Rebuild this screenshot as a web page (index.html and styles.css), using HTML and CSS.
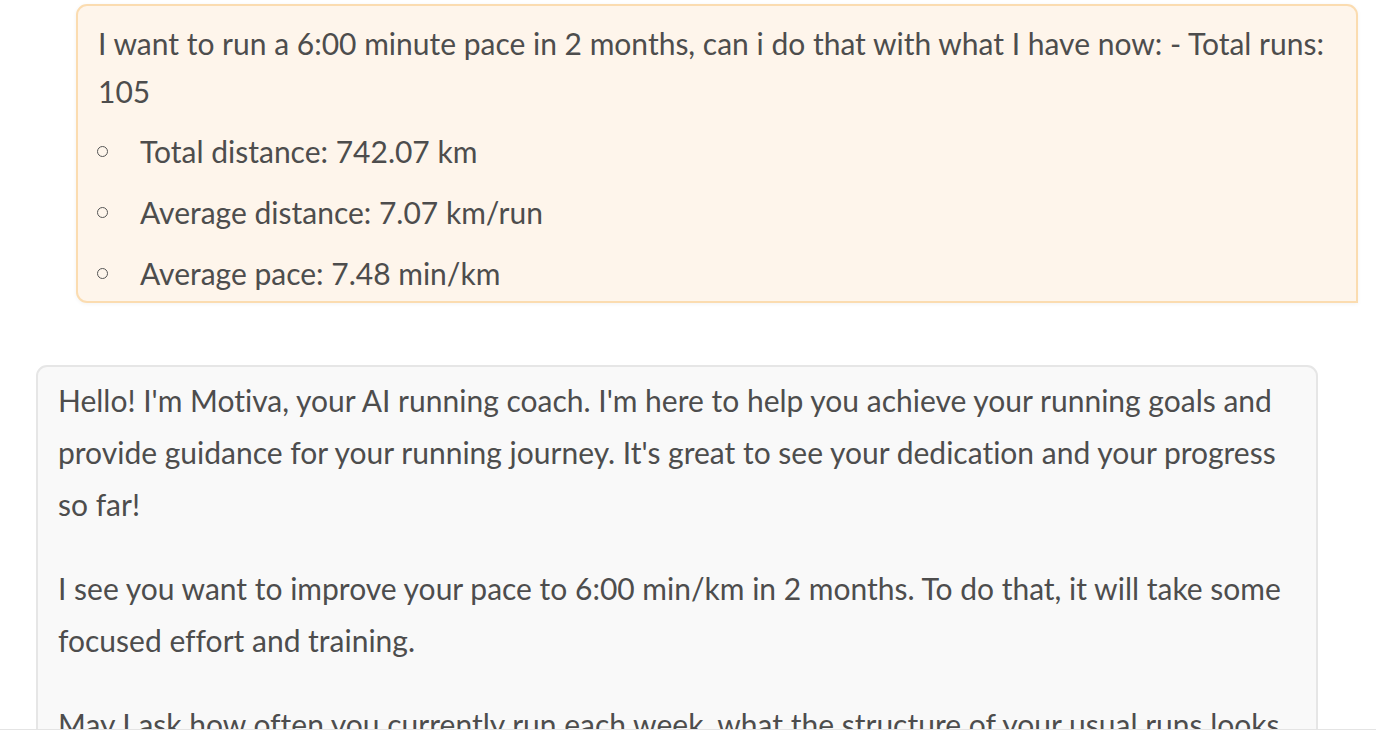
FILE: index.html
```html
<!DOCTYPE html>
<html lang="en">
<head>
<meta charset="utf-8">
<title>Motiva chat</title>
<link rel="stylesheet" href="styles.css">
</head>
<body>
<div class="chat">
  <div class="row row-user">
    <div class="bubble bubble-user">
      <p class="user-text">I want to run a 6:00 minute pace in 2 months, can i do that with what I have now: - Total runs: 105</p>
      <ul class="stats">
        <li>Total distance: 742.07 km</li>
        <li>Average distance: 7.07 km/run</li>
        <li>Average pace: 7.48 min/km</li>
      </ul>
    </div>
  </div>
  <div class="row row-bot">
    <div class="bubble bubble-bot">
      <p>Hello! I'm Motiva, your AI running coach. I'm here to help you achieve your running goals and provide guidance for your running journey. It's great to see your dedication and your progress so far!</p>
      <p>I see you want to improve your pace to 6:00 min/km in 2 months. To do that, it will take some focused effort and training.</p>
      <p>May I ask how often you currently run each week, what the structure of your usual runs looks like, and whether you have any other goals in mind?</p>
    </div>
  </div>
</div>
</body>
</html>
```
FILE: styles.css
```css
* { box-sizing: border-box; }
html, body { margin: 0; padding: 0; background: #ffffff; }
body {
  font-family: "Lato", "Liberation Sans", sans-serif;
  font-size: 30px;
  color: #4d4d4d;
  font-variant-ligatures: none;
}
.chat {
  height: 730px;
  overflow: hidden;
  border-bottom: 1px solid #e4e4e4;
  display: flex;
  flex-direction: column;
}
.row { display: flex; }
.row-user { padding: 4px 18px 0 76px; }
.row-bot { padding: 62px 58px 0 36px; }
.bubble { flex: 1; }
.bubble-user {
  background: #fef5eb;
  border: 2px solid #fbdcb0;
  border-radius: 11px 11px 0 11px;
  padding: 13px 20px 4px;
  box-shadow: 0 1px 4px rgba(0, 0, 0, 0.05);
}
.user-text { margin: 0; line-height: 48px; }
.stats { list-style: none; margin: 0; padding: 0; }
.stats li {
  position: relative;
  line-height: 48px;
  margin-top: 13px;
  padding-left: 42px;
}
.stats li:first-child { margin-top: 12px; }
.stats li::before {
  content: "";
  position: absolute;
  left: -1px;
  top: 19px;
  width: 9px;
  height: 9px;
  border: 1.5px solid #555;
  border-radius: 50%;
}
.bubble-bot {
  background: #f9f9f9;
  border: 2px solid #e6e6e6;
  border-radius: 11px 11px 11px 0;
  padding: 7px 20px 20px;
}
.bubble-bot p { margin: 0 0 32px; line-height: 52px; }
```
